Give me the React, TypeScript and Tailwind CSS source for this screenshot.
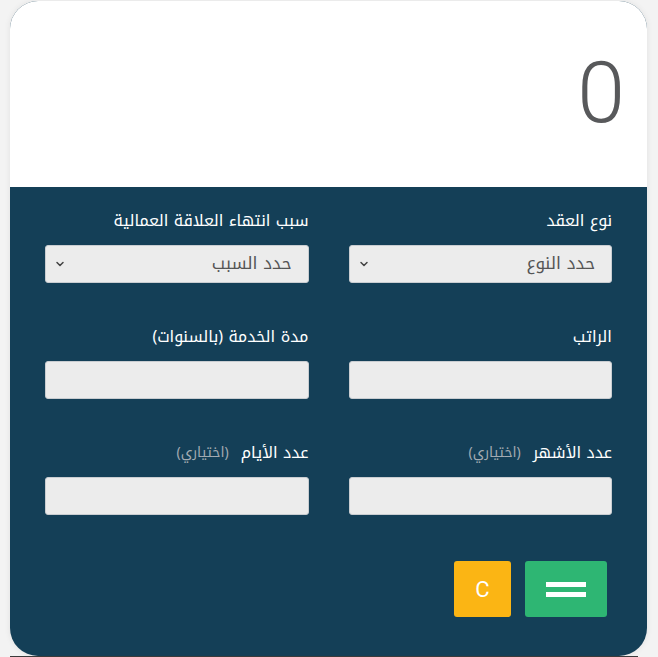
import { ChevronDown } from "lucide-react";

const arabic = { fontFamily: "'Noto Kufi Arabic', 'DejaVu Sans', sans-serif" };

function Label({ text, optional }: { text: string; optional?: boolean }) {
  return (
    <div
      className="flex items-center gap-3 h-[22px] mb-[13px] text-[16px] leading-[22px] text-white"
      style={arabic}
    >
      <span>{text}</span>
      {optional && <span className="text-[14px] text-[#a3abb2]">(اختياري)</span>}
    </div>
  );
}

function SelectBox({ label, placeholder }: { label: string; placeholder: string }) {
  return (
    <div>
      <Label text={label} />
      <div
        className="flex items-center justify-between h-[38px] rounded-[3px] border border-[#c9cdd1] bg-[#ececec] pr-4 pl-2 text-[17px] text-[#555]"
        style={arabic}
      >
        <span>{placeholder}</span>
        <ChevronDown className="w-3 h-3 text-[#444]" strokeWidth={3} />
      </div>
    </div>
  );
}

function InputBox({ label, optional }: { label: string; optional?: boolean }) {
  return (
    <div>
      <Label text={label} optional={optional} />
      <div className="h-[38px] rounded-[3px] border border-[#c9cdd1] bg-[#ececec]" />
    </div>
  );
}

export default function App() {
  return (
    <div
      className="min-h-[657px] bg-[#f3f3f3] pt-px pl-[10px] pr-[11px]"
      style={{ fontFamily: "Roboto, 'DejaVu Sans', sans-serif" }}
    >
      <div className="w-[637px] h-[655px] rounded-[28px] overflow-hidden bg-[#143f57] shadow-[0_0_6px_rgba(0,0,0,0.08)] flex flex-col">
        <div className="h-[186px] bg-white flex items-start justify-end pr-[22px] pt-[40px]">
          <span className="text-[86px] leading-[104px] font-light text-[#58595b]">0</span>
        </div>
        <div dir="rtl" className="px-[35px] pt-[23px]">
          <div className="grid grid-cols-2 gap-x-10 gap-y-[43px]">
            <SelectBox label="نوع العقد" placeholder="حدد النوع" />
            <SelectBox label="سبب انتهاء العلاقة العمالية" placeholder="حدد السبب" />
            <InputBox label="الراتب" />
            <InputBox label="مدة الخدمة (بالسنوات)" />
            <InputBox label="عدد الأشهر" optional />
            <InputBox label="عدد الأيام" optional />
          </div>
          <div className="flex gap-[14px] mt-[46px] pr-[5px]">
            <button className="w-[82px] h-[56px] rounded-[3px] bg-[#2eb673] flex flex-col items-center justify-center gap-[5px]">
              <span className="block w-10 h-[5px] bg-white" />
              <span className="block w-10 h-[5px] bg-white" />
            </button>
            <button className="w-[57px] h-[56px] rounded-[3px] bg-[#fbb514] text-white text-[22px] flex items-center justify-center">
              C
            </button>
          </div>
        </div>
      </div>
      <div className="h-px w-[628px] bg-[#3b3b3b]" />
    </div>
  );
}
